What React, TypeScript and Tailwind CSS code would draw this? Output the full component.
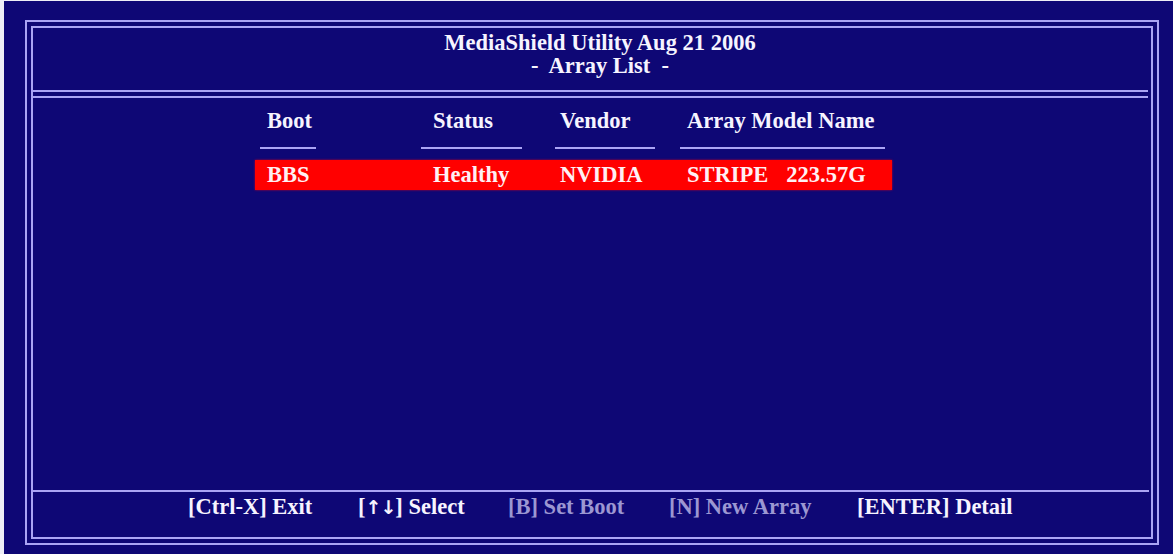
const columns = [
  { title: "Boot", text: "pl-[12px]", line: "ml-[5px] w-[56px]" },
  { title: "Status", text: "pl-[12px]", line: "w-[101px]" },
  { title: "Vendor", text: "pl-[5px]", line: "w-[100px]" },
  { title: "Array Model Name", text: "pl-[7px]", line: "w-[205px]" },
];

const keys = [
  { label: "[Ctrl-X] Exit", width: "w-[170px]", dim: false },
  { label: "Select", width: "w-[150px]", dim: false, arrows: true },
  { label: "[B] Set Boot", width: "w-[161px]", dim: true },
  { label: "[N] New Array", width: "w-[188px]", dim: true },
  { label: "[ENTER] Detail", width: "w-[160px]", dim: false },
];

const App = () => {
  return (
    <div
      className="w-[1173px] h-[554px] bg-[#eeeef6] pl-[4px] pt-[1px] overflow-hidden"
      style={{ fontFamily: '"Liberation Serif", "Times New Roman", serif' }}
    >
      <div className="h-[553px] bg-[#0e0775] pl-[21px] pt-[19px] font-bold text-[22.5px] text-[#f6f4ff]">
        <div className="w-[1134px] h-[525px] border-2 border-[#aaa4f4] p-[4px]">
          <div className="h-full border-2 border-[#aaa4f4] flex flex-col">
            {/* title */}
            <header className="h-[62px] pt-[3px] pl-[16px] flex flex-col items-center leading-[23px] whitespace-pre">
              <span>MediaShield Utility Aug 21 2006</span>
              <span>-  Array List  -</span>
            </header>
            <div className="h-[8px] mr-[3px] border-y-2 border-[#aaa4f4]" />

            {/* array table */}
            <section className="flex-1 pl-[222px] pt-[11px]">
              <div className="grid grid-cols-[166px_134px_125px_212px]">
                {columns.map((c) => (
                  <div key={c.title} className="flex flex-col">
                    <span className={`leading-[24px] ${c.text}`}>{c.title}</span>
                    <span className={`h-[2px] mt-[14px] bg-[#aaa4f4] ${c.line}`} />
                  </div>
                ))}
              </div>
              <div className="mt-[11px] w-[637px] h-[30px] bg-[#ff0000] shadow-[0_0_2px_#c0002a] grid grid-cols-[166px_134px_125px_212px] leading-[30px] text-[#fff0f4]">
                <span className="pl-[12px]">BBS</span>
                <span className="pl-[12px]">Healthy</span>
                <span className="pl-[5px]">NVIDIA</span>
                <span className="pl-[7px]">
                  STRIPE<span className="ml-[18px]">223.57G</span>
                </span>
              </div>
            </section>

            {/* key help */}
            <div className="h-[2px] mr-[2px] bg-[#aaa4f4]" />
            <footer className="h-[45px] pt-[3px] pl-[155px] flex leading-[24px]">
              {keys.map((k) => (
                <span
                  key={k.label}
                  className={`${k.width} ${k.dim ? "text-[#9c97d2]" : ""}`}
                >
                  {k.arrows ? (
                    <>
                      [
                      <span
                        className="text-[19px] tracking-[-1px]"
                        style={{ fontFamily: '"DejaVu Sans", sans-serif' }}
                      >
                        {"\u2191\u2193"}
                      </span>
                      ] {k.label}
                    </>
                  ) : (
                    k.label
                  )}
                </span>
              ))}
            </footer>
          </div>
        </div>
      </div>
    </div>
  );
};

export default App;
